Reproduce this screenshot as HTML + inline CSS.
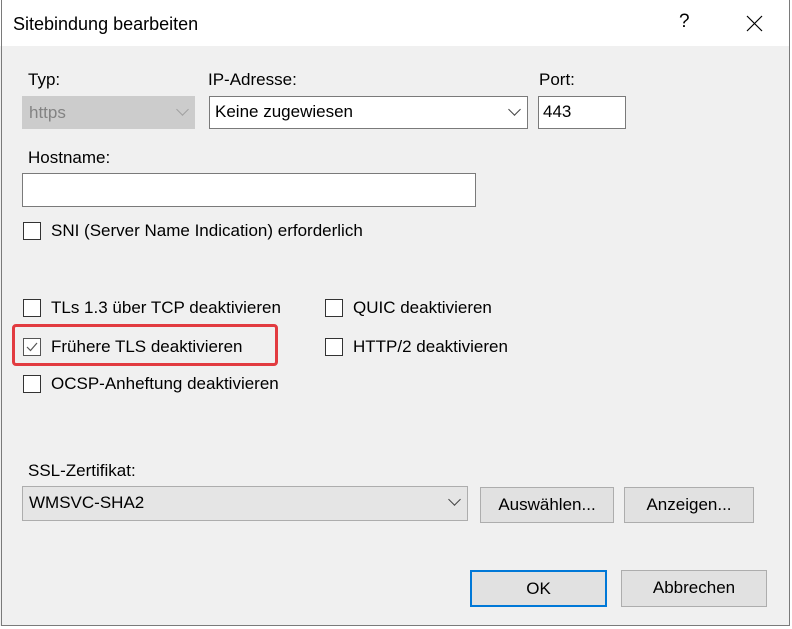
<!DOCTYPE html><html><head><style>
body{margin:0;width:792px;height:629px;background:#fff;position:relative;overflow:hidden;font-family:"Liberation Sans",sans-serif;font-size:17px;color:#000}
.d{position:absolute;left:0;top:0;width:790px;height:626px;background:#f0f0f0}
.tb{position:absolute;left:0;top:0;right:0;height:46px;background:#fff}
.a{position:absolute}
.lbl{position:absolute;font-size:17px;line-height:18px}
.box{position:absolute;box-sizing:border-box;background:#fff;border:1px solid #7a7a7a}
.cb{position:absolute;width:18px;height:18px;box-sizing:border-box;border:1px solid #333;background:#fff}
.btn{position:absolute;box-sizing:border-box;background:#e1e1e1;border:1px solid #adadad;text-align:center;line-height:34px}
.chev{position:absolute;width:8px;height:8px;border-right:1px solid #444;border-bottom:1px solid #444;transform:rotate(45deg)}
</style></head><body>
<div class="d">
<div class="tb"></div>
<div class="a" style="left:1px;top:0;width:1px;height:626px;background:#7a7a7a"></div>
<div class="a" style="left:789px;top:0;width:1px;height:626px;background:#7a7a7a"></div>
<div class="a" style="left:1px;top:625px;width:789px;height:1px;background:#7a7a7a"></div>
<div class="lbl" style="left:13px;top:15px;font-size:18px">Sitebindung bearbeiten</div>
<div class="lbl" style="left:679px;top:13px;font-size:19px">?</div>
<svg class="a" style="left:746px;top:15px" width="17" height="17"><path d="M1 1L16 16M16 1L1 16" stroke="#000" stroke-width="1.2"/></svg>

<div class="lbl" style="left:28px;top:71px">Typ:</div>
<div class="box" style="left:22px;top:96px;width:173px;height:33px;background:#cccccc;border-color:#cccccc"></div>
<div class="lbl" style="left:29px;top:104px;color:#838383">https</div>
<div class="chev" style="left:178px;top:105px;border-color:#a0a0a0"></div>

<div class="lbl" style="left:208px;top:71px">IP-Adresse:</div>
<div class="box" style="left:209px;top:96px;width:319px;height:33px"></div>
<div class="lbl" style="left:215px;top:103px">Keine zugewiesen</div>
<div class="chev" style="left:510px;top:105px"></div>

<div class="lbl" style="left:539px;top:71px">Port:</div>
<div class="box" style="left:538px;top:96px;width:88px;height:33px"></div>
<div class="lbl" style="left:543px;top:103px">443</div>

<div class="lbl" style="left:28px;top:149px">Hostname:</div>
<div class="box" style="left:22px;top:173px;width:454px;height:34px"></div>

<div class="cb" style="left:23px;top:222px"></div>
<div class="lbl" style="left:51px;top:222px">SNI (Server Name Indication) erforderlich</div>

<div class="cb" style="left:23px;top:299px"></div>
<div class="lbl" style="left:51px;top:299px">TLs 1.3 über TCP deaktivieren</div>
<div class="cb" style="left:325px;top:299px"></div>
<div class="lbl" style="left:353px;top:299px">QUIC deaktivieren</div>

<div class="a" style="left:12px;top:324px;width:266px;height:42px;box-sizing:border-box;border:3px solid #e23b40;border-radius:4px"></div>
<div class="cb" style="left:23px;top:338px;border-color:#555"></div>
<svg class="a" style="left:23px;top:338px" width="18" height="18"><path d="M4 9L7.5 12.5L14 5" fill="none" stroke="#555" stroke-width="1.2"/></svg>
<div class="lbl" style="left:51px;top:338px">Frühere TLS deaktivieren</div>
<div class="cb" style="left:325px;top:338px"></div>
<div class="lbl" style="left:353px;top:338px">HTTP/2 deaktivieren</div>

<div class="cb" style="left:23px;top:375px"></div>
<div class="lbl" style="left:51px;top:375px">OCSP-Anheftung deaktivieren</div>

<div class="lbl" style="left:28px;top:462px">SSL-Zertifikat:</div>
<div class="box" style="left:22px;top:486px;width:446px;height:35px;background:#e5e5e5;border-color:#adadad"></div>
<div class="lbl" style="left:29px;top:494px">WMSVC-SHA2</div>
<div class="chev" style="left:450px;top:495px"></div>

<div class="btn" style="left:480px;top:487px;width:134px;height:36px">Auswählen...</div>
<div class="btn" style="left:624px;top:487px;width:130px;height:36px">Anzeigen...</div>
<div class="btn" style="left:470px;top:570px;width:137px;height:37px;border:2px solid #0078d7;line-height:33px">OK</div>
<div class="btn" style="left:621px;top:570px;width:146px;height:37px">Abbrechen</div>
</div>
</body></html>
